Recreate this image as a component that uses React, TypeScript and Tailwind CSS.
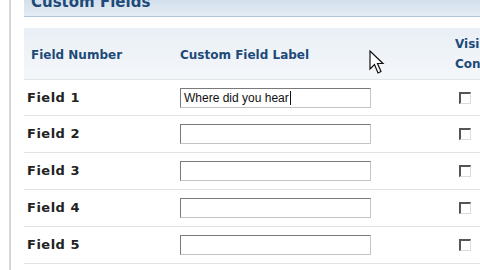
import React from 'react'

const rows = ['Field 1', 'Field 2', 'Field 3', 'Field 4', 'Field 5', 'Field 6']

function Cursor() {
  return (
    <svg className="absolute left-[369px] top-[50px]" width="16" height="26" viewBox="0 0 16 26">
      <path d="M1 1 L1 19 L5.5 14.5 L9 23 L12 21.5 L8.5 13.5 L14 13.5 Z" fill="#fff" stroke="#111" strokeWidth="1.2" strokeLinejoin="miter" />
    </svg>
  )
}

export default function App() {
  return (
    <div className="w-[480px] h-[270px] overflow-hidden bg-white relative font-['DejaVu_Sans',sans-serif]">
      <div className="ml-[9px] border-l-2 border-[#d6d6d6] h-full pl-[13px]">
        {/* section title bar */}
        <div className="h-[17px] bg-gradient-to-b from-[#d3e0ec] to-[#e4ecf4] border-b border-[#b3c4d6] overflow-hidden pl-[7px]">
          <div className="-mt-[8px] text-[15px] font-bold text-[#1d4a78] leading-[20px]">Custom Fields</div>
        </div>
        <div className="h-[11px]" />
        {/* table head */}
        <div className="grid grid-cols-[156px_275px_80px] h-[52px] bg-gradient-to-b from-[#e9eff5] to-[#f4f7fa] border-b border-[#dfe5eb] text-[12px] font-bold text-[#1d4a78] items-center">
          <div className="pl-[7px] pt-[2px]">Field Number</div>
          <div className="pt-[2px]">Custom Field Label</div>
          <div className="leading-[20px] pt-[1px]">
            <div>Visible</div>
            <div>Contact</div>
          </div>
        </div>
        {rows.map((r, i) => (
          <div
            key={r}
            className={`grid grid-cols-[156px_275px_80px] items-center border-b border-[#e2e2e2] ${i === 0 ? 'h-[36px]' : 'h-[37px]'}`}
          >
            <div className="pl-[3px] text-[13px] font-bold text-[#222] tracking-[0.5px]">{r}</div>
            <div>
              <div className="w-[191px] h-[20px] border border-t-[#7a7a7a] border-l-[#7a7a7a] border-r-[#c4c4c4] border-b-[#c4c4c4] bg-white flex items-center pl-[3px] font-['Liberation_Sans',sans-serif] text-[12px] text-[#111]">
                {i === 0 && (
                  <>
                    <span>Where did you hear</span>
                    <span className="ml-[1px] w-px h-[14px] bg-[#111]" />
                  </>
                )}
              </div>
            </div>
            <div className="pl-[4px]">
              <div className="w-[12px] h-[12px] border-t-2 border-l-2 border-t-[#555] border-l-[#555] border-r border-b border-r-[#dcdcdc] border-b-[#dcdcdc] bg-white" />
            </div>
          </div>
        ))}
      </div>
      <Cursor />
    </div>
  )
}
